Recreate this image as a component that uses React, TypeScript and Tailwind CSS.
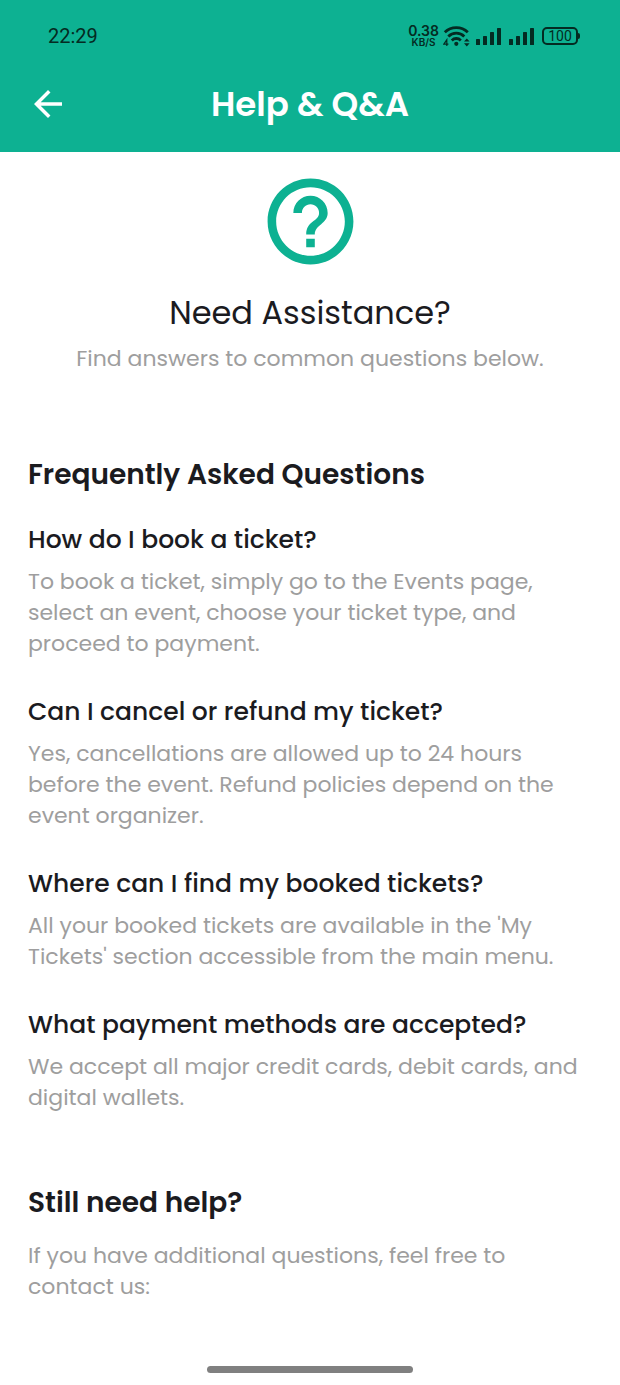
import React from "react";

const faqs = [
  {
    question: "How do I book a ticket?",
    answer:
      "To book a ticket, simply go to the Events page, select an event, choose your ticket type, and proceed to payment.",
  },
  {
    question: "Can I cancel or refund my ticket?",
    answer:
      "Yes, cancellations are allowed up to 24 hours before the event. Refund policies depend on the event organizer.",
  },
  {
    question: "Where can I find my booked tickets?",
    answer:
      "All your booked tickets are available in the 'My Tickets' section accessible from the main menu.",
  },
  {
    question: "What payment methods are accepted?",
    answer:
      "We accept all major credit cards, debit cards, and digital wallets.",
  },
];

function WifiIcon() {
  return (
    <svg width="27" height="22" viewBox="0 0 27 22" fill="none" aria-hidden="true">
      <g stroke="currentColor" strokeWidth="2.8">
        <path d="M1.8 7.2a16.5 16.5 0 0 1 23 0" />
        <path d="M5.3 11.4a11.4 11.4 0 0 1 16 0" />
        <path d="M8.8 15.4a6.3 6.3 0 0 1 9 0" />
      </g>
      <circle cx="13.3" cy="18.8" r="2.1" fill="currentColor" />
      <path d="M3.8 21v-6.2L0.8 19.2h4.6" stroke="currentColor" strokeWidth="1.2" />
      <path d="M21 16.6l2.8-3.2 2.8 3.2zM21 18.2l2.8 3.2 2.8-3.2z" fill="currentColor" />
    </svg>
  );
}

function SignalIcon() {
  return (
    <svg width="25" height="17" viewBox="0 0 25 17" fill="currentColor" aria-hidden="true">
      <rect x="0" y="11" width="4" height="6" rx="0.6" />
      <rect x="7" y="8" width="4" height="9" rx="0.6" />
      <rect x="14" y="4" width="4" height="13" rx="0.6" />
      <rect x="21" y="0" width="4" height="17" rx="0.6" />
    </svg>
  );
}

function StatusBar() {
  return (
    <div className="flex h-14 items-center justify-between pt-4 pr-10 pl-12 font-['Roboto',sans-serif] text-[#042b22]">
      <span className="text-xl">22:29</span>
      <div className="flex items-center">
        <div className="flex flex-col items-center font-['Inter',sans-serif] font-semibold">
          <span className="text-sm leading-3">0.38</span>
          <span className="text-[10px] leading-[10px]">KB/S</span>
        </div>
        <div className="ml-1">
          <WifiIcon />
        </div>
        <div className="ml-1.5 flex gap-2">
          <SignalIcon />
          <SignalIcon />
        </div>
        <div className="ml-2 flex items-center">
          <span className="flex h-[18px] w-9 items-center justify-center rounded-[5px] border-2 border-current text-sm leading-none">
            100
          </span>
          <span className="h-1.5 w-0.5 rounded-r-sm bg-current" />
        </div>
      </div>
    </div>
  );
}

export default function App() {
  return (
    <div className="flex min-h-screen flex-col bg-white font-['Poppins','Inter',sans-serif] text-[#1b1b1f]">
      <header className="bg-[#0db192]">
        <StatusBar />
        <div className="grid h-24 grid-cols-[42px_1fr_42px] items-center px-[27px] text-white">
          <button type="button" aria-label="Back">
            <svg viewBox="0 0 24 24" fill="currentColor" className="size-[42px]" aria-hidden="true">
              <path d="M20 11H7.83l5.59-5.59L12 4l-8 8 8 8 1.41-1.41L7.83 13H20v-2z" />
            </svg>
          </button>
          <h1 className="text-center text-[34px] leading-10 font-semibold">Help &amp; Q&amp;A</h1>
        </div>
      </header>

      <main className="flex-1 px-7">
        <section className="flex flex-col items-center pt-[18px] text-center">
          <svg viewBox="0 0 24 24" fill="currentColor" className="size-[103px] text-[#0db192]" aria-hidden="true">
            <path d="M11 18h2v-2h-2v2zm1-16C6.48 2 2 6.48 2 12s4.48 10 10 10 10-4.48 10-10S17.52 2 12 2zm0 18c-4.41 0-8-3.59-8-8s3.59-8 8-8 8 3.59 8 8-3.59 8-8 8zm0-14c-2.21 0-4 1.79-4 4h2c0-1.1.9-2 2-2s2 .9 2 2c0 2-3 1.75-3 5h2c0-2.25 3-2.5 3-5 0-2.21-1.79-4-4-4z" />
          </svg>
          <h2 className="mt-5 text-[32px] leading-10">Need Assistance?</h2>
          <p className="mt-2.5 text-[22px] leading-[31px] text-[#9e9e9e]">
            Find answers to common questions below.
          </p>
        </section>

        <section className="mt-20">
          <h2 className="text-[28px] leading-[42px] font-semibold">Frequently Asked Questions</h2>
          <div className="mt-[26px] flex flex-col gap-[35px]">
            {faqs.map((faq) => (
              <article key={faq.question}>
                <h3 className="text-[25px] leading-9 font-medium">{faq.question}</h3>
                <p className="mt-2 text-[22px] leading-[31px] text-[#9e9e9e]">{faq.answer}</p>
              </article>
            ))}
          </div>
        </section>

        <section className="mt-[69px]">
          <h2 className="text-[28px] leading-[42px] font-semibold">Still need help?</h2>
          <p className="mt-4 text-[22px] leading-[31px] text-[#9e9e9e]">
            If you have additional questions, feel free to contact us:
          </p>
        </section>
      </main>

      <footer className="flex justify-center pt-8 pb-3">
        <div className="h-[7px] w-1/3 rounded-full bg-[#808080]" />
      </footer>
    </div>
  );
}
